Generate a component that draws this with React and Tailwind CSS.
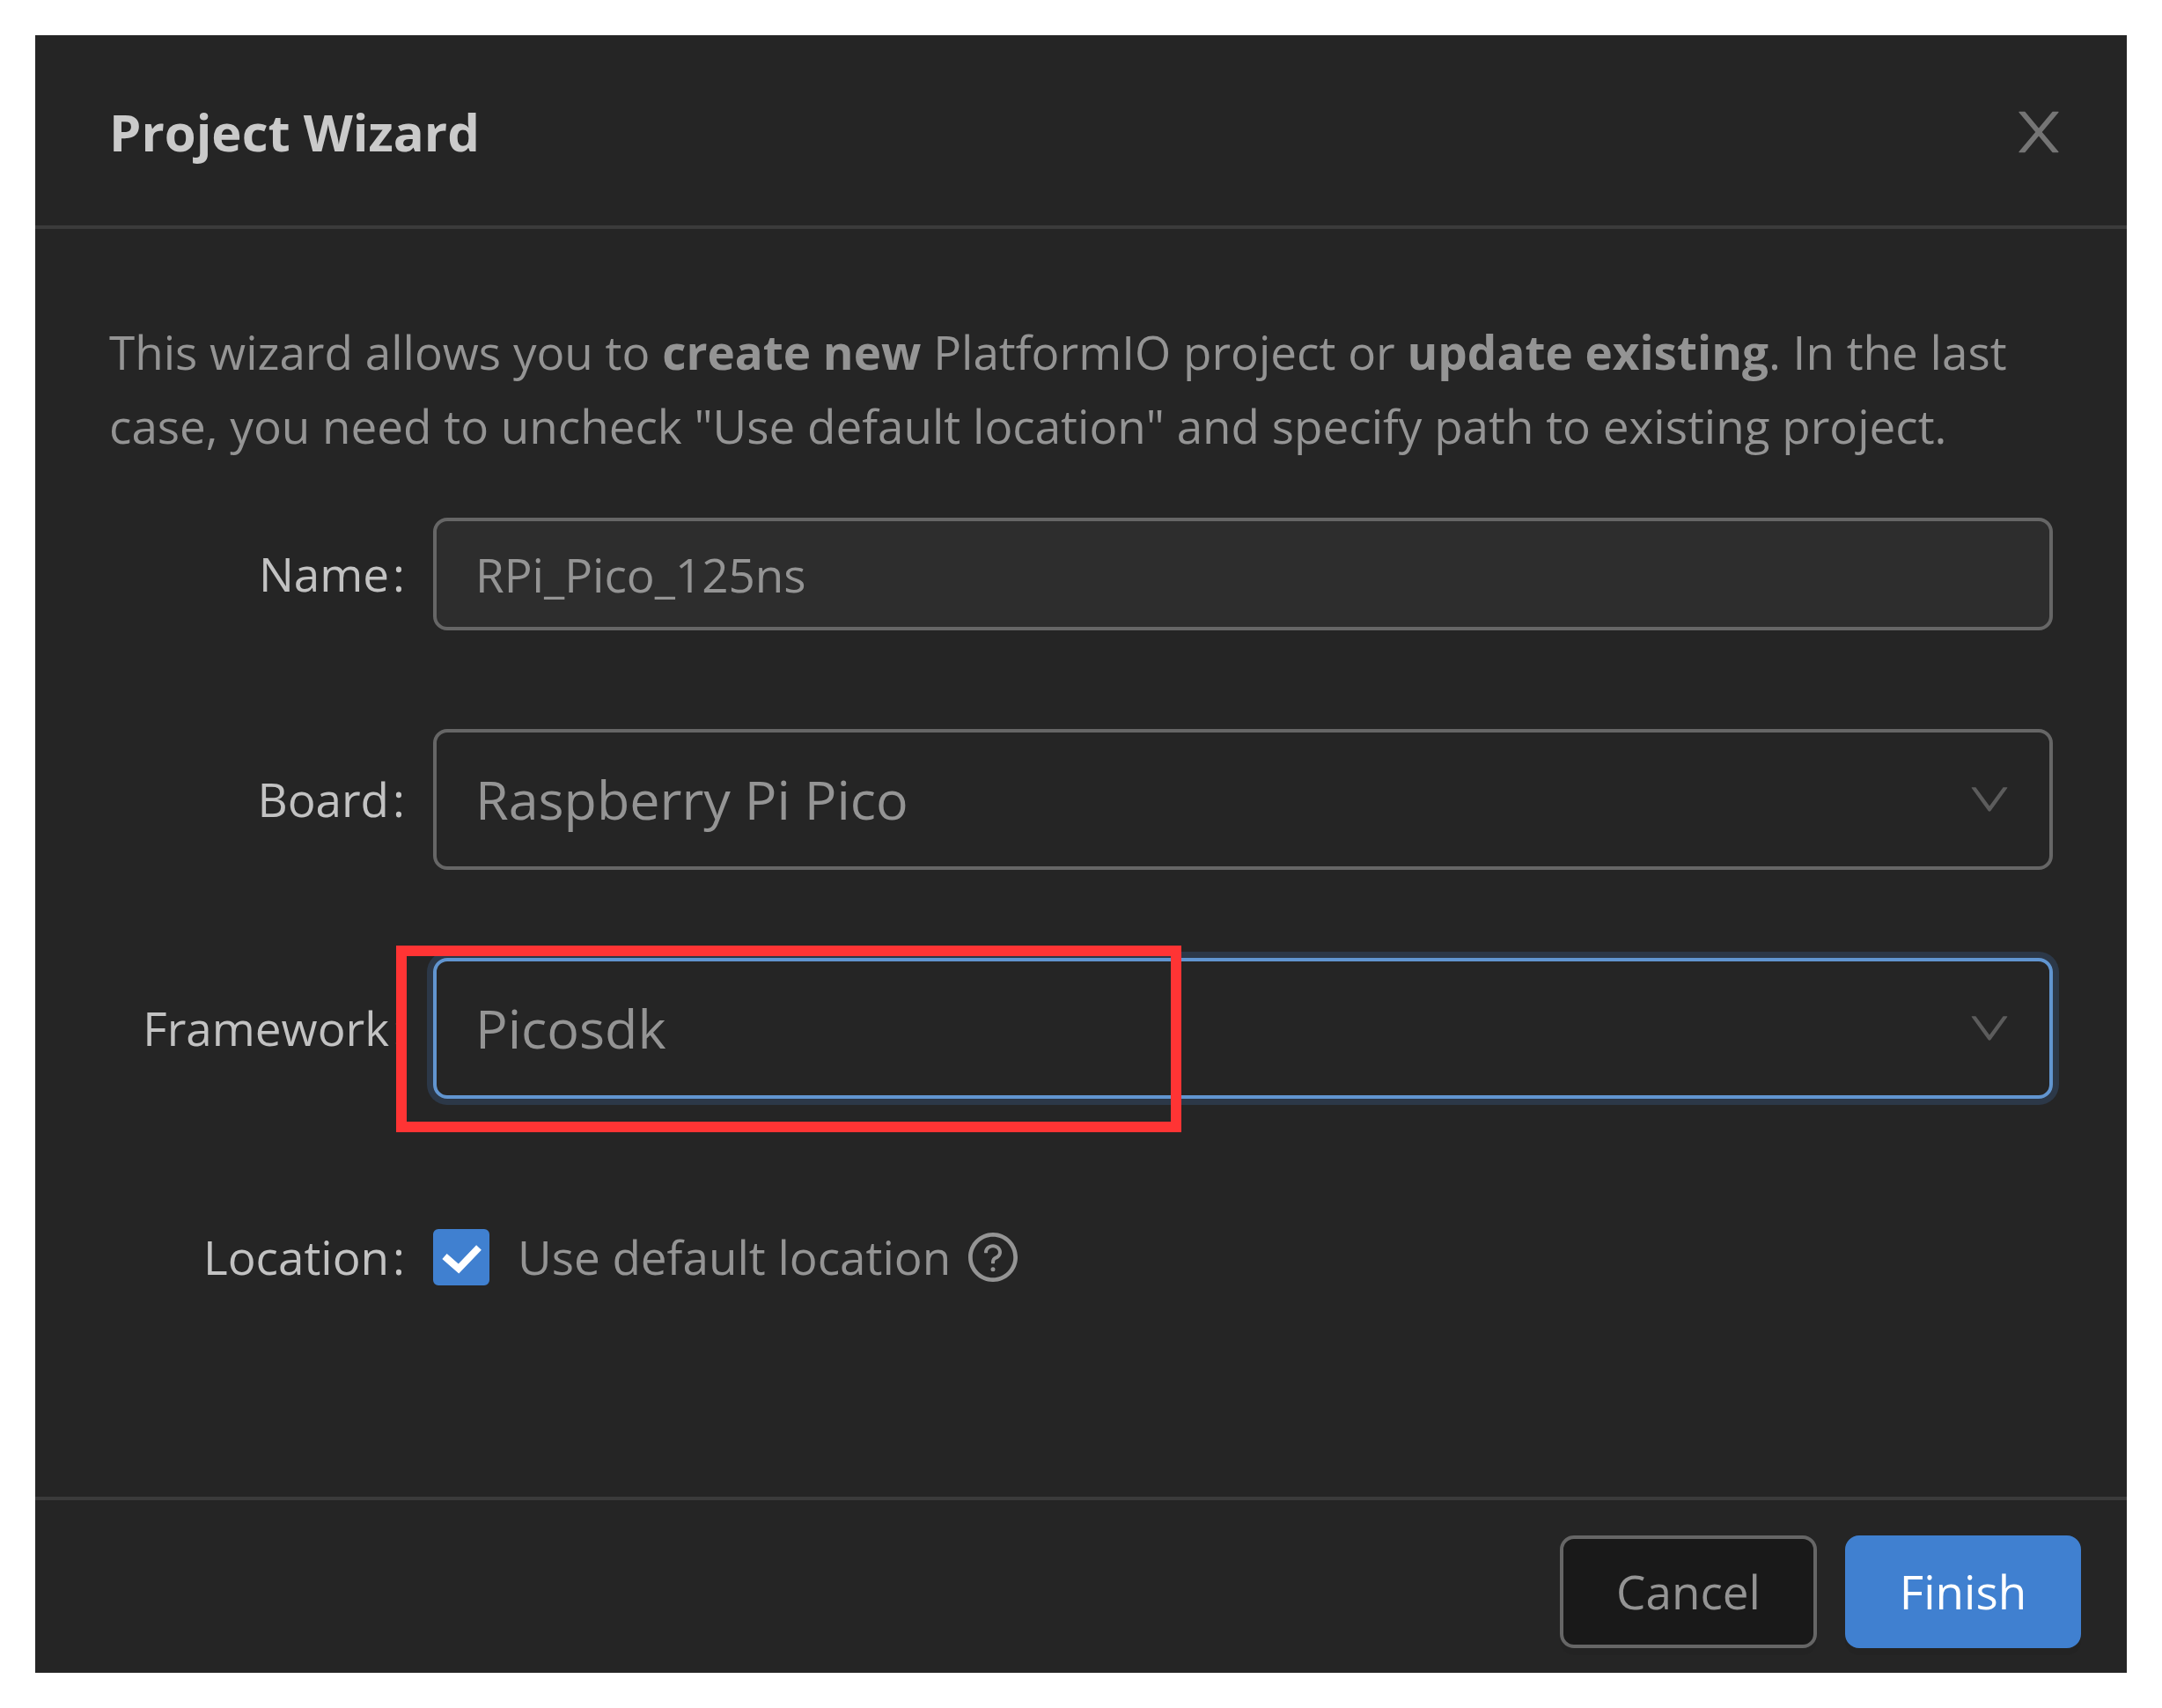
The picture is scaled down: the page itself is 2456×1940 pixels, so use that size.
import { useState } from "react";

const boards = ["Raspberry Pi Pico"];
const frameworks = ["Picosdk"];

function CloseIcon() {
    return (
        <svg viewBox="64 64 896 896" className="size-16" fill="currentColor" aria-hidden="true">
            <path d="M563.8 512l262.5-312.9c4.4-5.2.7-13.1-6.1-13.1h-79.8c-4.7 0-9.2 2.1-12.3 5.7L511.6 449.8 295.1 191.7c-3-3.6-7.5-5.7-12.3-5.7H203c-6.8 0-10.5 7.9-6.1 13.1L459.4 512 196.9 824.9A7.95 7.95 0 0 0 203 838h79.8c4.7 0 9.2-2.1 12.3-5.7l216.5-258.1 216.5 258.1c3 3.6 7.5 5.7 12.3 5.7h79.8c6.8 0 10.5-7.9 6.1-13.1L563.8 512z" />
        </svg>
    );
}

function DownIcon() {
    return (
        <svg
            viewBox="64 64 896 896"
            className="pointer-events-none absolute inset-y-0 right-12 my-auto size-12 text-[#5c5c5c]"
            fill="currentColor"
            aria-hidden="true"
        >
            <path d="M884 256h-75c-5.1 0-9.9 2.5-12.9 6.6L512 654.2 227.9 262.6c-3-4.1-7.8-6.6-12.9-6.6h-75c-6.5 0-10.3 7.4-6.5 12.7l352.6 486.1c12.8 17.6 39 17.6 51.7 0l352.6-486.1c3.9-5.3.1-12.7-6.4-12.7z" />
        </svg>
    );
}

function QuestionIcon() {
    return (
        <svg viewBox="64 64 896 896" className="size-14" fill="currentColor" aria-hidden="true">
            <path d="M512 64C264.6 64 64 264.6 64 512s200.6 448 448 448 448-200.6 448-448S759.4 64 512 64zm0 820c-205.4 0-372-166.6-372-372s166.6-372 372-372 372 166.6 372 372-166.6 372-372 372z" />
            <path d="M623.6 316.7C593.6 290.4 554 276 512 276s-81.6 14.5-111.6 40.7C369.2 344 352 380.7 352 420v7.6c0 4.4 3.6 8 8 8h48c4.4 0 8-3.6 8-8V420c0-44.1 43.1-80 96-80s96 35.9 96 80c0 31.1-22 59.6-56.1 72.7-21.2 8.1-39.2 22.3-52.1 40.9-13.1 19-19.9 41.8-19.9 64.9V620c0 4.4 3.6 8 8 8h48c4.4 0 8-3.6 8-8v-22.7a48.3 48.3 0 0 1 30.9-44.8c59-22.7 97.1-74.7 97.1-132.5.1-39.3-17.1-76-48.3-103.3zM472 732a40 40 0 1 0 80 0 40 40 0 1 0-80 0z" />
        </svg>
    );
}

function FormRow({ id, label, className = "", children }) {
    return (
        <div className={`flex items-center ${className}`}>
            <label htmlFor={id} className="flex w-1/6 justify-end gap-1 pr-8 font-medium text-[#c2c2c2]">
                {label}
                <span>:</span>
            </label>
            <div className="relative flex-1">{children}</div>
        </div>
    );
}

export default function App() {
    const [name, setName] = useState("RPi_Pico_125ns");
    const [board, setBoard] = useState(boards[0]);
    const [framework, setFramework] = useState(frameworks[0]);
    const [useDefault, setUseDefault] = useState(true);

    return (
        <main className="min-h-screen bg-white p-10 font-['Open_Sans','Noto_Sans',sans-serif]">
            <section role="dialog" aria-labelledby="wizard-title" className="bg-[#252525] text-[53px] leading-[84px] text-[#949494]">
                <header className="flex items-center justify-between border-b-4 border-[#3b3b3b] pt-[68px] pr-[68px] pb-16 pl-[84px]">
                    <h1 id="wizard-title" className="text-[58px] font-bold text-[#cacaca]">Project Wizard</h1>
                    <button type="button" aria-label="Close" className="text-[#757575]">
                        <CloseIcon />
                    </button>
                </header>

                <form onSubmit={(e) => e.preventDefault()}>
                    <div className="px-[84px] pt-[98px] pb-52">
                        <p className="mb-[62px]">
                            This wizard allows you to <b>create new</b> PlatformIO project or <b>update existing</b>. In the last
                            case, you need to uncheck "Use default location" and specify path to existing project.
                        </p>

                        <FormRow id="name" label="Name" className="mb-28">
                            <input
                                id="name"
                                type="text"
                                value={name}
                                onChange={(e) => setName(e.target.value)}
                                className="block h-32 w-full rounded-2xl border-4 border-[#666666] bg-[#2d2d2d] px-11 outline-none"
                            />
                        </FormRow>

                        <FormRow id="board" label="Board" className="mb-[100px]">
                            <select
                                id="board"
                                value={board}
                                onChange={(e) => setBoard(e.target.value)}
                                className="block h-40 w-full appearance-none rounded-2xl border-4 border-[#666666] bg-transparent px-11 text-[61px] outline-none"
                            >
                                {boards.map((item) => (
                                    <option key={item}>{item}</option>
                                ))}
                            </select>
                            <DownIcon />
                        </FormRow>

                        <FormRow id="framework" label="Framework" className="mb-[116px]">
                            <select
                                id="framework"
                                value={framework}
                                onChange={(e) => setFramework(e.target.value)}
                                className="block h-40 w-full appearance-none rounded-2xl border-4 border-[#6195d0] bg-transparent px-11 text-[61px] ring-7 ring-[#2c3848] outline-none"
                            >
                                {frameworks.map((item) => (
                                    <option key={item}>{item}</option>
                                ))}
                            </select>
                            <DownIcon />
                            {/* highlight frame */}
                            <div className="pointer-events-none absolute -top-3.5 -left-[42px] h-[212px] w-[892px] border-12 border-[#ff3434]" />
                        </FormRow>

                        <FormRow id="location" label="Location">
                            <div className="flex h-32 items-center">
                                <span className="relative mr-8 size-16">
                                    <input
                                        id="location"
                                        type="checkbox"
                                        checked={useDefault}
                                        onChange={(e) => setUseDefault(e.target.checked)}
                                        className="block size-16 appearance-none rounded-md border-4 border-[#666666] checked:border-[#4080d0] checked:bg-[#4080d0]"
                                    />
                                    {useDefault && (
                                        <svg viewBox="0 0 64 64" className="pointer-events-none absolute inset-0 size-16" aria-hidden="true">
                                            <path d="M13 31l16 14 23-24" fill="none" stroke="#ffffff" strokeWidth="8" />
                                        </svg>
                                    )}
                                </span>
                                <label htmlFor="location" className="mr-5">Use default location</label>
                                <QuestionIcon />
                            </div>
                        </FormRow>
                    </div>

                    <footer className="flex justify-end gap-8 border-t-4 border-[#3b3b3b] pt-10 pr-[52px] pb-7">
                        <button type="button" className="h-32 w-[292px] rounded-2xl border-4 border-[#666666] bg-[#191919] shadow-[0_8px_0_#00000008]">
                            Cancel
                        </button>
                        <button type="submit" className="h-32 w-[268px] rounded-2xl border-4 border-[#4080d0] bg-[#4080d0] font-medium text-white shadow-[0_8px_0_#0000000d]">
                            Finish
                        </button>
                    </footer>
                </form>
            </section>
        </main>
    );
}
